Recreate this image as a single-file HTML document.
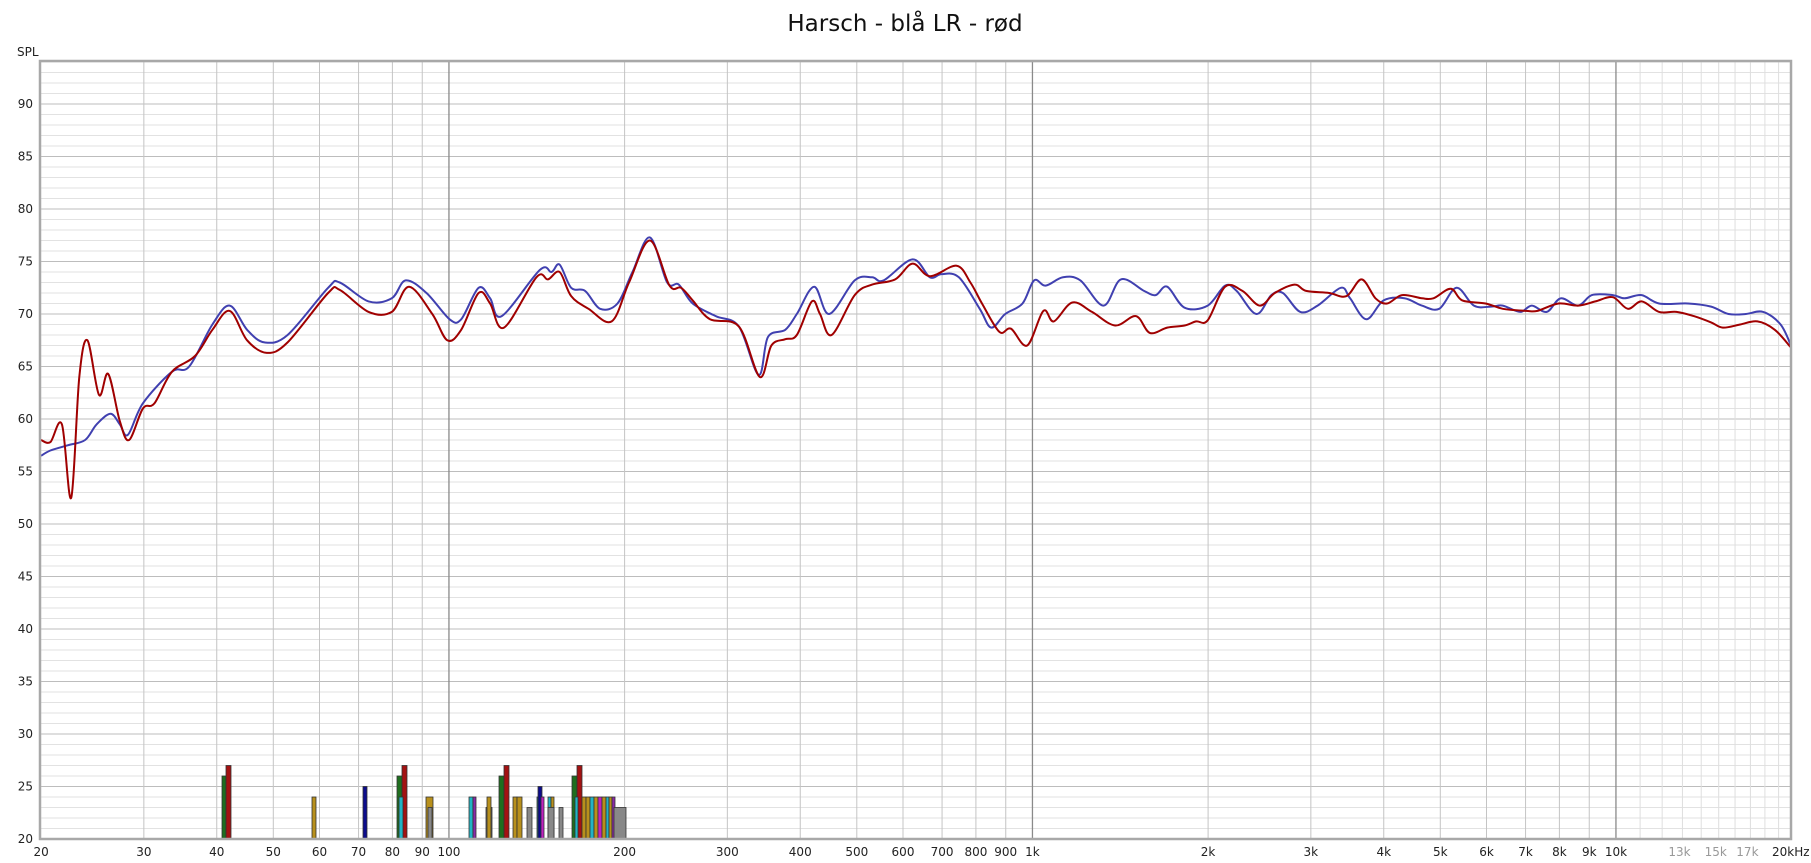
<!DOCTYPE html>
<html><head><meta charset="utf-8"><style>
html,body{margin:0;padding:0;background:#fff;width:1811px;height:863px;overflow:hidden}
svg{display:block}
text{font-family:"DejaVu Sans","Liberation Sans",sans-serif}
</style></head><body>
<svg id="s" width="1811" height="863" xmlns="http://www.w3.org/2000/svg">
<defs><clipPath id="cp"><rect x="41" y="62" width="1750" height="777"/></clipPath></defs>
<text x="905" y="31" font-size="23" text-anchor="middle" fill="#111">Harsch - blå LR - rød</text>
<text x="17" y="56" font-size="12" fill="#222">SPL</text>
<g id="grid"></g><g id="bars"></g><g id="curves" clip-path="url(#cp)"></g>
<rect x="40" y="61" width="1751" height="778" fill="none" stroke="#a8a8a8" stroke-width="2.5"/>
<g id="labels"></g>
</svg>
<script>
var NS="http://www.w3.org/2000/svg";
function el(p,t,a,txt){var e=document.createElementNS(NS,t);for(var k in a)e.setAttribute(k,a[k]);if(txt!=null)e.textContent=txt;p.appendChild(e);return e;}
var L=41.1,R=1791,T=62,B=839,D=583.5;
function fx(f){return L+Math.log10(f/20)*D;}
function fy(db){return B-(db-20)*10.5;}
var g=document.getElementById('grid'),lab=document.getElementById('labels');
for(var d=20;d<=94;d++){var y=fy(d);el(g,'line',{x1:L,x2:R,y1:y,y2:y,stroke:d%5==0?'#bdbdbd':'#e2e2e2','stroke-width':1});
 if(d%5==0&&d<=90)el(lab,'text',{x:33,y:y+4,'font-size':12,'text-anchor':'end',fill:'#222'},d);}
var fs=[];
for(var f=30;f<=90;f+=10)fs.push([f,''+f]);fs.push([100,'100']);
for(f=200;f<=900;f+=100)fs.push([f,''+f]);fs.push([1000,'1k']);
for(f=2;f<=9;f++)fs.push([f*1000,f+'k']);fs.push([10000,'10k']);
fs.forEach(function(a){var x=fx(a[0]);var dec=(a[0]==100||a[0]==1000||a[0]==10000);
 el(g,'line',{x1:x,x2:x,y1:T,y2:B,stroke:dec?'#8a8a8a':'#c4c4c4','stroke-width':dec?1.3:1});});
for(f=11000;f<20000;f+=1000){var x=fx(f);el(g,'line',{x1:x,x2:x,y1:T,y2:B,stroke:'#dedede','stroke-width':1});}
var xl=[[20,'20']].concat(fs);
xl.forEach(function(a){el(lab,'text',{x:fx(a[0]),y:856,'font-size':12,'text-anchor':'middle',fill:'#222'},a[1]);});
[[13000,'13k'],[15000,'15k'],[17000,'17k']].forEach(function(a){el(lab,'text',{x:fx(a[0])-3,y:856,'font-size':12,'text-anchor':'middle',fill:'#999'},a[1]);});
el(lab,'text',{x:1772,y:856,'font-size':12,'text-anchor':'start',fill:'#222'},'20kHz');
var bg=document.getElementById('bars');
var C={g:'#1e6e1e',r:'#a31212',o:'#b8901c',n:'#0c0c8c',c:'#22b4c4',p:'#8a2aa8',m:'#c020c0',y:'#888'};
var bars=[[222,226,26,'g'],[226,231,27,'r'],[312,316,24,'o'],[363,367,25,'n'],[397,402,26,'g'],[402,407,27,'r'],[399,403,24,'c'],[426,433,24,'o'],[428,432,23,'y'],
[469,473,24,'c'],[473,476,24,'p'],[486,492,23,'y'],[487,491,24,'o'],[499,504,26,'g'],[504,509,27,'r'],[513,517,24,'o'],[517,522,24,'o'],[527,532,23,'y'],
[537,541,24,'c'],[538,542,25,'n'],[541,544,24,'m'],[548,551,24,'c'],[551,554,24,'o'],[548,554,23,'y'],[559,563,23,'y'],[572,577,26,'g'],[577,582,27,'r'],
[575,578,24,'c'],[582,586,24,'o'],[586,590,24,'o'],[590,594,24,'c'],[594,598,24,'o'],[598,602,24,'m'],[602,606,24,'o'],[606,609,24,'c'],[609,612,24,'o'],[612,615,24,'p'],[614,626,23,'y']];
bars.forEach(function(b){el(bg,'rect',{x:b[0],y:fy(b[2]),width:b[1]-b[0],height:B-fy(b[2]),fill:C[b[3]],stroke:'#333','stroke-width':0.8});});
var blue=[[37,56.5],[45,57],[60,57.5],[75,58],[85,59.5],[97,60.5],[105,59.5],[112,58.5],[125,61.5],[150,64.5],[165,65],[185,69],[200,70.8],[215,68.5],[230,67.3],[250,68],[285,72.5],[295,73],[320,71.2],[340,71.5],[352,73.2],[370,72],[390,69.5],[400,69.5],[415,72.5],[425,71.5],[435,69.8],[468,74.2],[478,74],[485,74.7],[495,72.5],[507,72.2],[520,70.5],[535,71],[548,74],[563,77.3],[578,73],[588,72.8],[600,71],[620,69.8],[640,68.8],[657,64.2],[665,67.8],[680,68.5],[690,70],[705,72.6],[718,70],[740,73.2],[755,73.5],[765,73.2],[790,75.2],[805,73.5],[815,73.8],[830,73.5],[848,70.5],[858,68.7],[870,70],[885,71],[895,73.2],[905,72.7],[920,73.5],[935,73.2],[955,70.8],[970,73.3],[990,72.2],[1000,71.8],[1010,72.6],[1025,70.6],[1045,70.8],[1060,72.7],[1070,72.2],[1087,70],[1100,71.8],[1110,72],[1125,70.2],[1140,70.8],[1160,72.5],[1168,71.5],[1182,69.5],[1197,71.3],[1215,71.5],[1230,70.8],[1245,70.5],[1260,72.5],[1275,70.8],[1290,70.7],[1300,70.8],[1315,70.2],[1325,70.8],[1338,70.2],[1350,71.5],[1365,70.8],[1377,71.8],[1395,71.8],[1405,71.5],[1420,71.8],[1435,71],[1460,71],[1480,70.7],[1495,70],[1510,70],[1525,70.2],[1540,69],[1549,67]];
var red=[[37,58],[45,57.8],[55,59.5],[63,52.5],[70,64],[77,67.5],[87,62.3],[95,64.3],[105,59.8],[113,58],[125,61],[135,61.5],[150,64.5],[170,66],[185,68.5],[200,70.3],[215,67.5],[232,66.3],[250,67.3],[285,72],[295,72.3],[320,70.2],[340,70.2],[355,72.6],[375,70],[388,67.5],[400,68.5],[415,72],[425,71],[437,68.7],[465,73.5],[475,73.3],[485,74],[495,71.7],[510,70.5],[530,69.3],[545,73],[563,77],[580,72.7],[590,72.5],[600,71.3],[615,69.5],[640,68.8],[658,64],[668,67],[680,67.6],[690,68],[703,71.2],[710,70],[720,68],[740,71.8],[755,72.8],[775,73.3],[790,74.8],[805,73.6],[828,74.6],[840,73],[850,71],[865,68.3],[875,68.6],[889,67],[903,70.3],[912,69.3],[928,71.1],[945,70.2],[965,68.9],[983,69.8],[995,68.2],[1010,68.7],[1025,68.9],[1035,69.3],[1045,69.4],[1060,72.6],[1075,72.2],[1090,70.8],[1103,72],[1120,72.8],[1130,72.2],[1150,72],[1165,71.7],[1178,73.3],[1190,71.5],[1200,71],[1213,71.8],[1230,71.5],[1240,71.5],[1255,72.4],[1265,71.3],[1285,71],[1300,70.5],[1320,70.3],[1330,70.3],[1348,71],[1365,70.8],[1380,71.2],[1395,71.6],[1408,70.5],[1420,71.2],[1435,70.2],[1450,70.2],[1465,69.8],[1480,69.2],[1490,68.7],[1505,69],[1520,69.3],[1535,68.5],[1549,66.8]];
var S=(1791-41.1)/(1549-37);
function path(pts){var p=pts.map(function(q){return [L+(q[0]-37)*S,fy(q[1])];});
 var d='M'+p[0][0].toFixed(1)+','+p[0][1].toFixed(1);
 for(var i=0;i<p.length-1;i++){var p0=p[i-1]||p[i],p1=p[i],p2=p[i+1],p3=p[i+2]||p2;
  var c1x=p1[0]+(p2[0]-p0[0])/6,c1y=p1[1]+(p2[1]-p0[1])/6,c2x=p2[0]-(p3[0]-p1[0])/6,c2y=p2[1]-(p3[1]-p1[1])/6;
  d+=' C'+c1x.toFixed(1)+','+c1y.toFixed(1)+' '+c2x.toFixed(1)+','+c2y.toFixed(1)+' '+p2[0].toFixed(1)+','+p2[1].toFixed(1);}
 return d;}
var cg=document.getElementById('curves');
el(cg,'path',{d:path(blue),fill:'none',stroke:'#4040b0','stroke-width':2});
el(cg,'path',{d:path(red),fill:'none',stroke:'#a00000','stroke-width':2});
</script>
</body></html>
